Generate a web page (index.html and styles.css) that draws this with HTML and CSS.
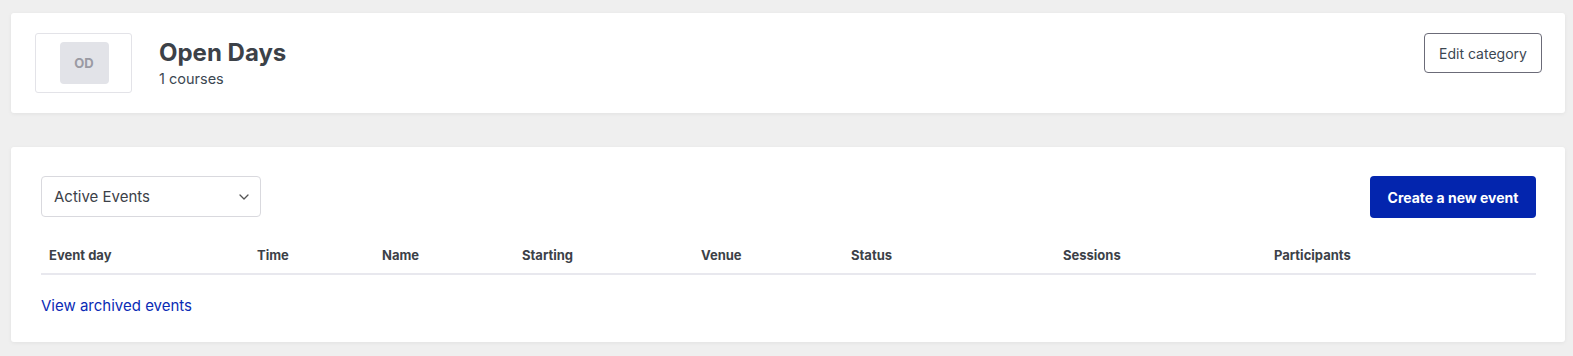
FILE: index.html
```html
<!DOCTYPE html>
<html lang="en">
  <head>
    <meta charset="UTF-8" />
    <meta name="viewport" content="width=device-width, initial-scale=1.0" />
    <title>Open Days</title>
    <link rel="stylesheet" href="styles.css">
  </head>
  <body>
    <div class="page">
      <div class="card category-card">
        <div class="category-logo">
          <div class="logo-initials">OD</div>
        </div>
        <div class="category-info">
          <h1>Open Days</h1>
          <div class="course-count">1 courses</div>
        </div>
        <button class="btn-outline">Edit category</button>
      </div>

      <div class="card events-card">
        <div class="events-toolbar">
          <div class="select-box">
            <span>Active Events</span>
            <svg width="10" height="6" viewBox="0 0 10 6" fill="none">
              <path d="M1 1l4 4 4-4" stroke="#555" stroke-width="1.3" stroke-linecap="round" stroke-linejoin="round" />
            </svg>
          </div>
          <button class="btn-primary">Create a new event</button>
        </div>

        <table class="events-table">
          <thead>
            <tr>
              <th class="col-day">Event day</th>
              <th class="col-time">Time</th>
              <th class="col-name">Name</th>
              <th class="col-start">Starting</th>
              <th class="col-venue">Venue</th>
              <th class="col-status">Status</th>
              <th class="col-sessions">Sessions</th>
              <th>Participants</th>
            </tr>
          </thead>
        </table>

        <a href="#" class="archived-link">View archived events</a>
      </div>
    </div>
  </body>
</html>
```

FILE: styles.css
```css
:root {
  --page-bg: #efefef;
  --card-bg: #ffffff;
  --text-color: #3c4148;
  --muted: #9a9aa3;
  --border-light: #e3e3e8;
  --primary: #0325ae;
}

body {
  margin: 0;
  background: var(--page-bg);
  font-family: Inter, "Noto Sans", sans-serif;
  color: var(--text-color);
}

.page {
  padding: 13px 8px 14px 11px;
  display: flex;
  flex-direction: column;
  gap: 34px;
}

.card {
  background: var(--card-bg);
  border-radius: 3px;
  box-shadow: 0 1px 4px rgba(0, 0, 0, 0.06);
}

/* cabeçalho da categoria */
.category-card {
  display: flex;
  align-items: flex-start;
  padding: 20px 23px 20px 24px;
}

.category-logo {
  width: 95px;
  height: 58px;
  border: 1px solid var(--border-light);
  border-radius: 3px;
  display: flex;
  align-items: center;
  justify-content: center;
}

.logo-initials {
  width: 49px;
  height: 42px;
  border-radius: 4px;
  background: #e2e3e8;
  color: var(--muted);
  font-size: 13px;
  font-weight: 700;
  display: flex;
  align-items: center;
  justify-content: center;
  margin-left: 1px;
}

.category-info {
  flex: 1;
  margin-left: 27px;
  padding-top: 5px;
}

h1 {
  margin: 0;
  font-size: 24px;
  font-weight: 700;
  line-height: 29px;
  color: #3c4148;
}

.course-count {
  font-size: 14.5px;
  line-height: 20px;
  margin-top: 2px;
  color: #3c4752;
}

.btn-outline {
  width: 118px;
  height: 40px;
  background: #fff;
  border: 1px solid #6b6b78;
  border-radius: 4px;
  font-family: inherit;
  font-size: 14px;
  color: #3c4752;
  padding: 0;
  cursor: pointer;
}

/* lista de eventos */
.events-card {
  padding: 29px 29px 27px 30px;
}

.events-toolbar {
  display: flex;
  justify-content: space-between;
  align-items: flex-start;
}

.select-box {
  border: 1px solid #d9d9de;
  border-radius: 4px;
  display: flex;
  align-items: center;
  justify-content: space-between;
  padding: 0 11px 0 12px;
  box-sizing: border-box;
  width: 220px;
  height: 41px;
  font-size: 15px;
  color: #3c4148;
}

.btn-primary {
  width: 166px;
  height: 42px;
  background: var(--primary);
  color: #fff;
  border: none;
  border-radius: 4px;
  font-family: inherit;
  font-size: 14px;
  font-weight: 700;
  cursor: pointer;
}

.events-table {
  width: 100%;
  border-collapse: collapse;
  margin-top: 20px;
}

.events-table th {
  text-align: left;
  font-size: 13px;
  font-weight: 700;
  color: #3c4148;
  padding: 9px 8px 10px 8px;
  border-bottom: 2px solid #e8e8ee;
}

.col-day { width: 192px; }
.col-time { width: 109px; }
.col-name { width: 124px; }
.col-start { width: 163px; }
.col-venue { width: 134px; }
.col-status { width: 196px; }
.col-sessions { width: 195px; }

.archived-link {
  display: inline-block;
  margin-top: 21px;
  font-size: 15px;
  color: #0a2bb5;
  text-decoration: none;
}
```
